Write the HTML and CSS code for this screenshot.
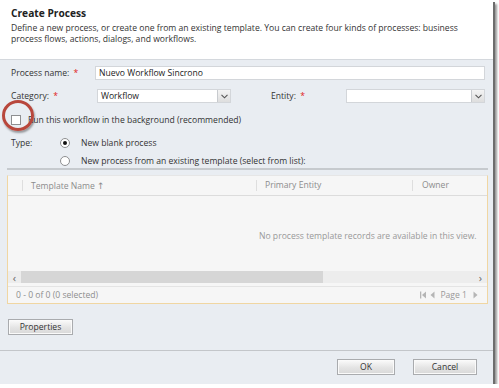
FILE: index.html
```html
<!DOCTYPE html>
<html lang="en">
<head>
    <meta charset="UTF-8">
    <title>Create Process</title>
    <link rel="stylesheet" href="styles.css">
</head>
<body>

    <div class="dialog">

        <!-- Header -->
        <div class="header">
            <h1>Create Process</h1>
            <p>Define a new process, or create one from an existing template. You can create four kinds of processes: business process flows, actions, dialogs, and workflows.</p>
        </div>

        <!-- Form -->
        <div class="form">
            <div class="row row-name">
                <label class="lbl lbl-name">Process name: <span class="req">*</span></label>
                <div class="input">Nuevo Workflow Sincrono</div>
            </div>

            <div class="row row-cat">
                <label class="lbl lbl-cat">Category: <span class="req">*</span></label>
                <div class="select select-cat">
                    <span>Workflow</span>
                    <span class="drop"><svg width="7" height="5" viewBox="0 0 7 5"><path d="M0.5 0.8 L3.5 3.8 L6.5 0.8" fill="none" stroke="#555" stroke-width="1.1"/></svg></span>
                </div>
                <label class="lbl lbl-entity">Entity: <span class="req">*</span></label>
                <div class="select select-entity">
                    <span></span>
                    <span class="drop"><svg width="7" height="5" viewBox="0 0 7 5"><path d="M0.5 0.8 L3.5 3.8 L6.5 0.8" fill="none" stroke="#555" stroke-width="1.1"/></svg></span>
                </div>
            </div>

            <div class="row row-check">
                <span class="checkbox"></span>
                <span>Run this workflow in the background (recommended)</span>
                <span class="circle"></span>
            </div>

            <div class="row row-type">
                <label class="lbl lbl-type">Type:</label>
                <span class="radio checked"></span>
                <span>New blank process</span>
            </div>

            <div class="row row-type2">
                <span class="radio"></span>
                <span>New process from an existing template (select from list):</span>
            </div>
        </div>

        <div class="divider"></div>

        <!-- Template grid -->
        <div class="grid">
            <div class="grid-head">
                <div class="col col-first"></div>
                <div class="col col-name">Template Name <span class="sort">&#8593;</span></div>
                <div class="col col-entity">Primary Entity</div>
                <div class="col col-owner">Owner</div>
            </div>
            <div class="grid-body">
                <p>No process template records are available in this view.</p>
            </div>
            <div class="scrollbar">
                <span class="arr">&lsaquo;</span>
                <div class="track"><div class="thumb"></div></div>
                <span class="arr">&rsaquo;</span>
            </div>
            <div class="grid-foot">
                <span>0 - 0 of 0 (0 selected)</span>
                <span class="pager">
                    <svg width="7" height="8" viewBox="0 0 7 8"><rect x="0" y="0.5" width="1.3" height="7" fill="#b5b5b5"/><path d="M6 0.5 L2 4 L6 7.5 Z" fill="#b5b5b5"/></svg>
                    <svg width="5" height="8" viewBox="0 0 5 8"><path d="M4.5 0.5 L0.5 4 L4.5 7.5 Z" fill="#b5b5b5"/></svg>
                    <span class="page">Page 1</span>
                    <svg width="5" height="8" viewBox="0 0 5 8"><path d="M0.5 0.5 L4.5 4 L0.5 7.5 Z" fill="#b5b5b5"/></svg>
                </span>
            </div>
        </div>

        <div class="props">
            <button class="btn btn-props">Properties</button>
        </div>

        <!-- Footer -->
        <div class="footer">
            <button class="btn btn-ok">OK</button>
            <button class="btn btn-cancel">Cancel</button>
        </div>
    </div>

</body>
</html>
```

FILE: styles.css
```css
* {
    margin: 0;
    padding: 0;
    box-sizing: border-box;
}

body {
    font-family: 'Open Sans', 'DejaVu Sans', sans-serif;
    font-size: 8.6px;
    color: #333;
    background-color: #ffffff;
}

.dialog {
    width: 493px;
    height: 384px;
    background-color: #e9edf2;
    display: flex;
    flex-direction: column;
    position: relative;
    box-shadow: 2px 2px 0 #6d6d6d, 4px 4px 2px #9a9a9a;
}

/* Header */
.header {
    height: 60px;
    background-color: #ffffff;
    padding: 7px 11px 0;
    border-bottom: 1px solid #d4d8dd;
}

.header h1 {
    font-size: 10.2px;
    font-weight: bold;
    line-height: 12px;
    color: #222;
}

.header p {
    width: 462px;
    margin-top: 4px;
    line-height: 10.5px;
    color: #333;
}

/* Form rows */
.form {
    padding: 0 0 0 11px;
}

.row {
    display: flex;
    align-items: center;
    position: relative;
}

.row-name {
    margin-top: 6px;
    height: 14px;
}

.lbl {
    color: #333;
}

.req {
    color: #e02020;
    margin-left: 2px;
}

.lbl-name {
    width: 84px;
}

.input {
    width: 390px;
    height: 14px;
    background-color: #fff;
    border: 1px solid #d3d6da;
    padding-left: 3px;
    line-height: 12px;
    color: #222;
}

.row-cat {
    margin-top: 9px;
    height: 14px;
}

.lbl-cat {
    width: 86px;
}

.lbl-entity {
    width: 75px;
    margin-left: 40px;
}

.select {
    height: 14px;
    background-color: #fff;
    border: 1px solid #d3d6da;
    display: flex;
    justify-content: space-between;
    align-items: stretch;
    line-height: 12px;
    padding-left: 3px;
    color: #222;
}

.select-cat {
    width: 134px;
}

.select-entity {
    width: 139px;
}

.drop {
    width: 13px;
    border-left: 1px solid #c8cbcf;
    background: linear-gradient(#f4f4f4, #dedede);
    display: flex;
    align-items: center;
    justify-content: center;
}

.row-check {
    margin-top: 12px;
    height: 10px;
    gap: 7px;
}

.checkbox {
    width: 10px;
    height: 10px;
    background-color: #fff;
    border: 1px solid #8e8f91;
}

/* Red annotation circle */
.circle {
    position: absolute;
    left: -9px;
    top: -15px;
    width: 32px;
    height: 31px;
    border: 3px solid #b8473c;
    border-radius: 50%;
    box-shadow: 1px 2px 2px rgba(0, 0, 0, 0.35);
}

.row-type {
    margin-top: 13px;
    height: 10px;
}

.lbl-type {
    width: 49px;
}

.radio {
    width: 10px;
    height: 10px;
    border-radius: 50%;
    background-color: #fff;
    border: 1px solid #8e8f91;
    margin-right: 11px;
    position: relative;
}

.radio.checked::after {
    content: '';
    position: absolute;
    left: 2px;
    top: 2px;
    width: 4px;
    height: 4px;
    border-radius: 50%;
    background-color: #111;
}

.row-type2 {
    margin-top: 8px;
    height: 10px;
    padding-left: 49px;
}

.divider {
    margin: 2px 5px 0 7px;
    border-top: 2px solid #c6cace;
}

/* Grid */
.grid {
    margin: 5px 5px 0 7px;
    height: 129px;
    background-color: #f6f6f6;
    border: 1px solid #f0d6a2;
    border-top: 1px solid #e6e6e6;
    display: flex;
    flex-direction: column;
}

.grid-head {
    height: 20px;
    display: flex;
    align-items: center;
    border-bottom: 1px solid #dcdcdc;
    color: #8c8c8c;
}

.col {
    height: 11px;
    line-height: 11px;
    border-left: 1px solid #dedede;
}

.col-first {
    width: 14px;
    border-left: none;
}

.col-name {
    width: 234px;
    padding-left: 8px;
}

.sort {
    font-size: 9px;
}

.col-entity {
    width: 156px;
    padding-left: 8px;
}

.col-owner {
    flex: 1;
    padding-left: 9px;
}

.grid-body {
    height: 74px;
    padding: 34px 0 0 251px;
    color: #999;
}

.scrollbar {
    height: 12px;
    margin-top: 1px;
    display: flex;
    align-items: center;
    background-color: #ededed;
    color: #666;
}

.arr {
    width: 13px;
    text-align: center;
    font-size: 11px;
    line-height: 11px;
}

.track {
    flex: 1;
    height: 12px;
}

.thumb {
    width: 302px;
    height: 12px;
    background-color: #d6d6d6;
}

.grid-foot {
    margin-top: 3px;
    border-top: 1px solid #e4e4e4;
    flex: 1;
    display: flex;
    align-items: center;
    justify-content: space-between;
    padding: 0 9px 0 8px;
    color: #8e8e8e;
}

.pager {
    display: flex;
    align-items: center;
    gap: 3px;
}

.page {
    margin: 0 3px 0 2px;
    color: #999;
}

/* Buttons */
.btn {
    font-family: 'Open Sans', 'DejaVu Sans', sans-serif;
    font-size: 8.6px;
    color: #333;
    height: 16px;
    border: 1px solid #a9abae;
    background: linear-gradient(#fbfbfb, #e4e4e4 55%, #d8d8d8);
    box-shadow: inset 0 0 0 1px #fafafa;
}

.props {
    padding: 15px 0 0 8px;
}

.btn-props {
    width: 65px;
}

.footer {
    margin-top: 15px;
    border-top: 1px solid #c3c6ca;
    padding: 8px 16px 0 0;
    display: flex;
    justify-content: flex-end;
    gap: 18px;
}

.btn-ok {
    width: 58px;
}

.btn-cancel {
    width: 64px;
}
```
